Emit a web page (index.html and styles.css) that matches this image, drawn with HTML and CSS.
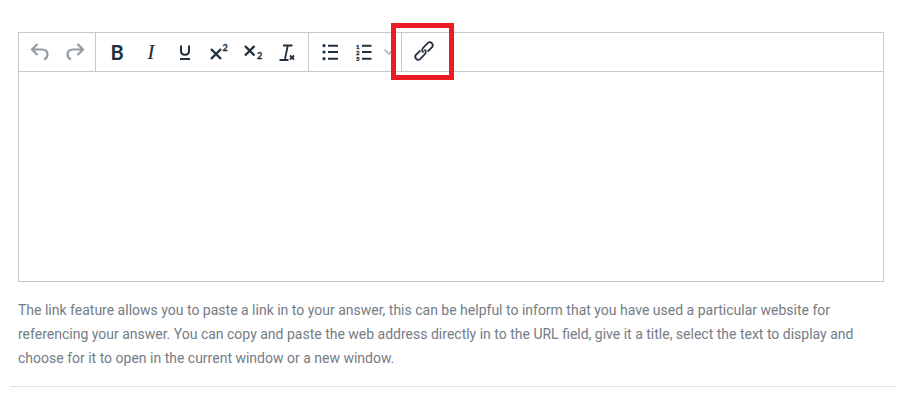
FILE: index.html
```html
<!DOCTYPE html>
<html lang="en">

<head>
    <meta charset="UTF-8">
    <meta name="viewport" content="width=device-width, initial-scale=1.0">
    <title>Link feature</title>
    <link rel="stylesheet" href="styles.css">
</head>

<body>
    <div class="page">
        <div class="editor">
            <div class="toolbar">
                <div class="group">
                    <span class="btn muted">
                        <svg width="24" height="24" viewBox="0 0 24 24"><path d="M9.500 4 L4 9.500 L9.500 15 M4 9.500 H14 C17.500 9.500 19.500 11.500 19.500 14.500 C19.500 16.500 18 18.500 16 19.500"/></svg>
                    </span>
                    <span class="btn muted">
                        <svg width="24" height="24" viewBox="0 0 24 24"><path d="M15.500 4 L21 9.500 L15.500 15 M21 9.500 H11 C7.500 9.500 5.500 11.500 5.500 14.500 C5.500 16.500 7 18.500 9 19.500"/></svg>
                    </span>
                </div>
                <div class="group">
                    <span class="btn"><span class="glyph bold">B</span></span>
                    <span class="btn"><span class="glyph italic">I</span></span>
                    <span class="btn">
                        <svg width="24" height="24" viewBox="0 0 24 24"><path d="M8 5.500 V11 C8 13.500 9.500 14.800 12 14.800 C14.500 14.800 16 13.500 16 11 V5.500 M7 19 H17"/></svg>
                    </span>
                    <span class="btn">
                        <svg width="24" height="24" viewBox="0 0 24 24"><path class="thick" d="M4 9 L14 19 M14 9 L4 19"/><text class="idx" x="15.500" y="11">2</text></svg>
                    </span>
                    <span class="btn">
                        <svg width="24" height="24" viewBox="0 0 24 24"><path class="thick" d="M4 6 L13.500 15.500 M13.500 6 L4 15.500"/><text class="idx" x="16" y="19">2</text></svg>
                    </span>
                    <span class="btn">
                        <svg width="24" height="24" viewBox="0 0 24 24"><path class="thin" d="M8 5.500 H17.500 M12.800 5.500 L10 19"/><path d="M4.500 20 H13.500"/><path class="thin" d="M15 15.500 L19 19.500 M19 15.500 L15 19.500"/></svg>
                    </span>
                </div>
                <div class="group">
                    <span class="btn">
                        <svg width="24" height="24" viewBox="0 0 24 24"><circle class="dot" cx="6" cy="5.700" r="1.600"/><circle class="dot" cx="6" cy="12" r="1.600"/><circle class="dot" cx="6" cy="18.700" r="1.600"/><path d="M10 5.700 H20 M10 12 H20 M10 18.700 H20"/></svg>
                    </span>
                    <span class="btn">
                        <svg width="24" height="24" viewBox="0 0 24 24"><text class="num" x="4" y="8.500">1</text><text class="num" x="4" y="14.500">2</text><text class="num" x="4" y="20.500">3</text><path d="M10 5.700 H19.500 M10 12 H19.500 M10 18.700 H19.500"/></svg>
                    </span>
                    <span class="chevron">
                        <svg width="16" height="24" viewBox="0 0 16 24"><path d="M3.500 9.500 L8 14 L12.500 9.500"/></svg>
                    </span>
                </div>
                <div class="group last">
                    <span class="btn">
                        <svg width="24" height="24" viewBox="0 0 24 24"><g transform="translate(1 -1)"><path class="link" d="M11.500 13.500 A3 3 0 0 1 11 9 L15.900 3.900 A3 3 0 0 1 20.100 8.100 L15.500 12.700"/><path class="link" d="M12.500 10.500 A3 3 0 0 1 13 15 L8.100 20.100 A3 3 0 0 1 3.900 15.900 L8.500 11.300"/></g></svg>
                    </span>
                </div>
                <div class="highlight"></div>
            </div>
            <div class="content"></div>
        </div>
        <p class="desc">The link feature allows you to paste a link in to your answer, this can be helpful to inform that you have used a particular website for referencing your answer. You can copy and paste the web address directly in to the URL field, give it a title, select the text to display and choose for it to open in the current window or a new window.</p>
        <div class="rule"></div>
    </div>
</body>

</html>
```

FILE: styles.css
```css
* {
    margin: 0;
    padding: 0;
    box-sizing: border-box;
}

body {
    background: #ffffff;
    font-family: Roboto, "Liberation Sans", sans-serif;
}

.page {
    padding: 32px 4px 0 10px;
}

.editor {
    margin: 0 12px 0 8px;
    border: 1px solid #c8c8c8;
}

.toolbar {
    display: flex;
    height: 39px;
    border-bottom: 1px solid #c8c8c8;
    position: relative;
}

.group {
    display: flex;
    align-items: center;
    padding: 0 4px;
    border-right: 1px solid #c8c8c8;
}

.group.last {
    border-right: 0;
}

.btn {
    display: flex;
    align-items: center;
    justify-content: center;
    width: 34px;
    height: 34px;
}

.chevron {
    display: flex;
    align-items: center;
    width: 16px;
    height: 34px;
}

svg path {
    fill: none;
    stroke: #222f3e;
    stroke-width: 2;
}

svg .thick {
    stroke-width: 2.400;
}

svg .thin {
    stroke-width: 1.800;
}

svg .link {
    stroke-width: 1.800;
}

svg .dot {
    fill: #222f3e;
}

svg text {
    fill: #222f3e;
    stroke: #222f3e;
    stroke-width: 0.300;
    font-family: Lato, Roboto, sans-serif;
    font-weight: 700;
}

svg .idx {
    font-size: 9px;
}

svg .num {
    font-size: 6px;
}

.muted svg path {
    stroke: #929aa2;
    stroke-width: 2.200;
}

.chevron svg path {
    stroke: #bcc0c4;
}

.glyph {
    color: #222f3e;
    line-height: 24px;
}

.bold {
    font-family: Lato, sans-serif;
    font-weight: 700;
    font-size: 20px;
}

.italic {
    font-family: "Liberation Serif", serif;
    font-style: italic;
    font-size: 22px;
}

.highlight {
    position: absolute;
    left: 372px;
    top: -10px;
    width: 63px;
    height: 57px;
    border: 5px solid #ed1c24;
}

.content {
    height: 209px;
}

.desc {
    margin: 16px 8px 0 8px;
    font-size: 14px;
    line-height: 24px;
    color: #747c85;
}

.rule {
    margin-top: 16px;
    border-top: 1px solid #dee2e6;
}
```
